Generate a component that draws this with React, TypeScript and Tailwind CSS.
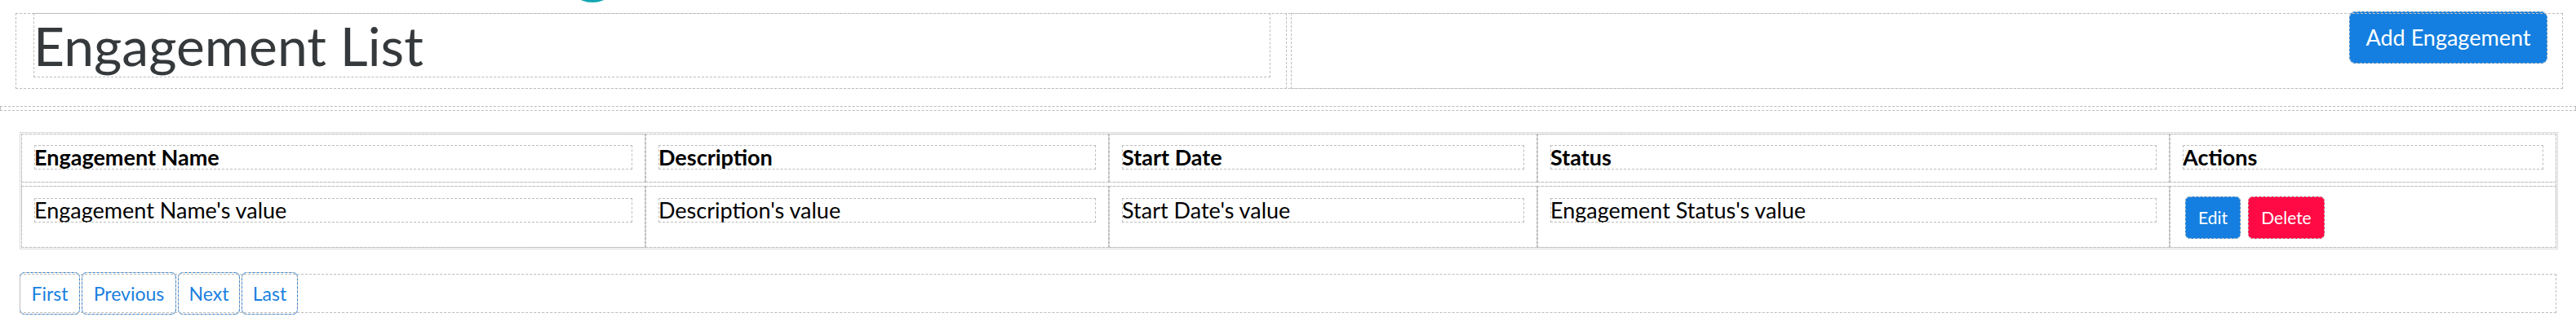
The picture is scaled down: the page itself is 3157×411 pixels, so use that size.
import React from "react";

const columns = [
  { label: "Engagement Name", value: "Engagement Name's value" },
  { label: "Description", value: "Description's value" },
  { label: "Start Date", value: "Start Date's value" },
  { label: "Status", value: "Engagement Status's value" },
];

const pages = [
  { label: "First", w: "w-[74px]" },
  { label: "Previous", w: "w-[116px]" },
  { label: "Next", w: "w-[76px]" },
  { label: "Last", w: "w-[69px]" },
];

const dashed = "outline-1 outline-dashed outline-[#bdbdbd] -outline-offset-1";

function TextBox({ children, bold }: { children: React.ReactNode; bold?: boolean }) {
  return (
    <div className={`h-[30px] leading-[30px] text-[27px] text-black ${bold ? "font-bold" : ""} ${dashed}`}>
      {children}
    </div>
  );
}

export default function App() {
  return (
    <div className="relative w-[3157px] h-[411px] overflow-hidden bg-white font-['Source_Sans_Pro','Lato',sans-serif]">
      {/* editor handle peeking in from the top */}
      <div className="absolute left-[692px] top-[-65px] w-[68px] h-[68px] rounded-full bg-[#12a6b2]" />

      {/* page header */}
      <div className="pt-[16px] pl-[19px]">
        <div className={`flex w-[3122px] h-[93px] gap-[5px] ${dashed}`}>
          <div className={`w-[1558px] pl-[22px] pr-[20px] ${dashed}`}>
            <h1 className={`h-[79px] leading-[79px] text-[66px] text-[#35393c] ${dashed}`}>Engagement List</h1>
          </div>
          <div className={`flex flex-1 justify-end pr-[19px] ${dashed}`}>
            <button className={`mt-[-2px] h-[64px] w-[243px] rounded-[8px] bg-[#147fe0] text-[27px] text-white ${dashed}`}>
              Add Engagement
            </button>
          </div>
        </div>
      </div>

      <div className={`mt-[21px] h-[6px] w-full ${dashed}`} />

      {/* list table */}
      <div className="mt-[26px] ml-[24px] w-[3111px] border border-[#dadada] p-px">
        <div className={`grid grid-cols-[765px_568px_525px_775px_474px] gap-y-[4px] ${dashed}`}>
          {columns.map((c) => (
            <div key={c.label} className={`border border-[#e2e2e2] px-[15px] pt-[13px] pb-[15px] ${dashed}`}>
              <TextBox bold>{c.label}</TextBox>
            </div>
          ))}
          <div className={`border border-[#e2e2e2] px-[15px] pt-[13px] pb-[15px] ${dashed}`}>
            <TextBox bold>Actions</TextBox>
          </div>
          {columns.map((c) => (
            <div key={c.value} className={`h-[76px] border border-[#e2e2e2] px-[15px] pt-[14px] ${dashed}`}>
              <TextBox>{c.value}</TextBox>
            </div>
          ))}
          <div className={`h-[76px] border border-[#e2e2e2] pl-[18px] pt-[12px] ${dashed}`}>
            <div className="flex gap-[9px]">
              <button className={`h-[52px] w-[68px] rounded-[6px] bg-[#147fe0] text-[21px] text-white ${dashed}`}>Edit</button>
              <button className={`h-[52px] w-[94px] rounded-[6px] bg-[#ff0a45] text-[21px] text-white ${dashed}`}>Delete</button>
            </div>
          </div>
        </div>
      </div>

      {/* pagination */}
      <div className={`mt-[30px] ml-[24px] flex w-[3109px] h-[48px] items-center ${dashed}`}>
        {pages.map((p) => (
          <button
            key={p.label}
            className={`h-[52px] ${p.w} mr-[2px] rounded-[6px] border border-[#1a7fe0] text-[23px] text-[#1a7fe0] ${dashed}`}
          >
            {p.label}
          </button>
        ))}
      </div>
    </div>
  );
}
